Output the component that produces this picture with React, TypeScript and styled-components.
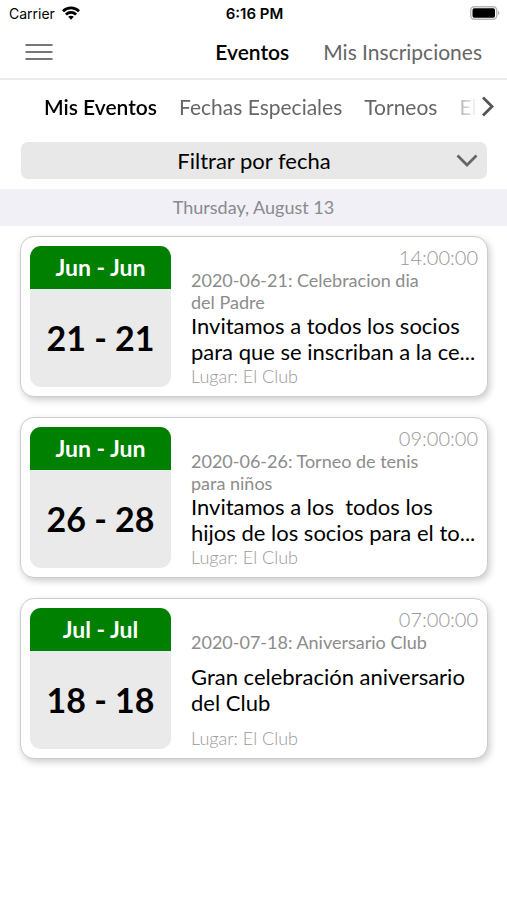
import React from "react";
import styled, { createGlobalStyle } from "styled-components";

const GlobalStyle = createGlobalStyle`
  *, *::before, *::after { box-sizing: border-box; }
  body { margin: 0; background: #fff; color: #000; font-family: Lato, "Liberation Sans", sans-serif; }
  button, select { font: inherit; color: inherit; border: 0; padding: 0; background: none; }
  h2, p { margin: 0; font-weight: 400; }
`;

const Page = styled.div`
  min-height: 100vh;
  background: #fff;
`;

const StatusBar = styled.div`
  display: grid;
  grid-template-columns: 1fr auto 1fr;
  align-items: center;
  height: 26px;
  padding: 0 7px 0 9px;
  font-family: Inter, sans-serif;
  font-size: 14px;
`;

const Carrier = styled.span`
  display: flex;
  align-items: center;
  gap: 7px;
`;

const Clock = styled.strong`
  font-size: 15px;
  font-weight: 600;
`;

const BatteryIcon = styled.svg`
  justify-self: end;
`;

const TopBar = styled.header`
  display: flex;
  align-items: center;
  height: 54px;
  padding: 0 25px;
  border-bottom: 2px solid #ececec;
`;

const MenuButton = styled.button`
  display: flex;
  margin-right: auto;
  cursor: pointer;
`;

const MainNav = styled.nav`
  display: flex;
  gap: 34px;
`;

const NavLink = styled.a<{ $active?: boolean }>`
  color: ${(p) => (p.$active ? "#000" : "#666")};
  font-size: 21px;
  font-weight: ${(p) => (p.$active ? 600 : 400)};
  line-height: 26px;
  text-decoration: none;
  white-space: nowrap;
`;

const TabBar = styled.div`
  display: flex;
  align-items: center;
  height: 53px;
  padding: 0 10px 0 44px;
`;

const Tabs = styled.nav`
  display: flex;
  flex: 1;
  min-width: 0;
  gap: 22px;
  overflow: hidden;
  mask-image: linear-gradient(to right, #000 calc(100% - 40px), transparent);
`;

const NextButton = styled.button`
  display: flex;
  flex: none;
  cursor: pointer;
`;

const FilterField = styled.div`
  display: grid;
  align-items: center;
  height: 37px;
  margin: 9px 20px 10px 21px;
  border-radius: 7px;
  background: #e8e8e9;
  & > * { grid-area: 1 / 1; }
`;

const FilterSelect = styled.select`
  appearance: none;
  width: 100%;
  height: 100%;
  font-size: 22px;
  text-align: center;
  text-align-last: center;
`;

const FilterArrow = styled.svg`
  justify-self: end;
  margin-right: 9px;
  pointer-events: none;
`;

const DateHeading = styled.h2`
  background: #f0f0f6;
  color: #8a8a8e;
  font-size: 18px;
  line-height: 37px;
  text-align: center;
`;

const EventList = styled.main`
  display: flex;
  flex-direction: column;
  gap: 20px;
  padding: 10px 19px 20px 20px;
`;

const Card = styled.article`
  display: flex;
  gap: 20px;
  padding: 9px;
  border: 1px solid #ccc;
  border-radius: 14px;
  background: #fff;
  box-shadow: 2px 3px 7px rgba(0, 0, 0, 0.2);
`;

const DateBox = styled.div`
  flex: none;
  align-self: flex-start;
  width: 141px;
  border-radius: 11px;
  overflow: hidden;
  background: #eaeaea;
  font-weight: 700;
  text-align: center;
`;

const Months = styled.div`
  background: #008000;
  color: #fff;
  font-size: 23px;
  line-height: 43px;
`;

const Days = styled.div`
  font-size: 34px;
  line-height: 98px;
`;

const Details = styled.div`
  display: flex;
  flex: 1;
  flex-direction: column;
  justify-content: space-between;
  min-width: 0;
`;

const Heading = styled.div``;

const Time = styled.time`
  display: block;
  color: #999;
  font-size: 20px;
  font-weight: 300;
  line-height: 23px;
  text-align: right;
`;

const Title = styled.p`
  max-width: 250px;
  color: #8c8c8c;
  font-size: 18px;
  line-height: 22px;
`;

const Description = styled.p`
  font-size: 22px;
  line-height: 26px;
  white-space: pre-wrap;
`;

const Place = styled.p`
  color: #999;
  font-size: 18px;
  font-weight: 300;
  line-height: 22px;
`;

const events = [
  {
    months: "Jun - Jun",
    days: "21 - 21",
    time: "14:00:00",
    title: "2020-06-21: Celebracion dia del Padre",
    description: "Invitamos a todos los socios para que se inscriban a la ce...",
    place: "El Club",
  },
  {
    months: "Jun - Jun",
    days: "26 - 28",
    time: "09:00:00",
    title: "2020-06-26: Torneo de tenis para niños",
    description: "Invitamos a los  todos los hijos de los socios para el to...",
    place: "El Club",
  },
  {
    months: "Jul - Jul",
    days: "18 - 18",
    time: "07:00:00",
    title: "2020-07-18: Aniversario Club",
    description: "Gran celebración aniversario del Club",
    place: "El Club",
  },
];

export default function App() {
  return (
    <Page>
      <GlobalStyle />
      <StatusBar>
        <Carrier>
          Carrier
          <svg width="18" height="14" viewBox="0 0 18 14" fill="none" stroke="#000" strokeWidth="2.8" aria-hidden="true">
            <path d="M1 5.2C5.5.8 12.5.8 17 5.2M3.9 8.6c3-2.8 7.2-2.8 10.2 0" />
            <path d="M6.2 10.8c1.6-1.4 4-1.4 5.6 0L9 13.8z" fill="#000" stroke="none" />
          </svg>
        </Carrier>
        <Clock>6:16 PM</Clock>
        <BatteryIcon width="30" height="14" viewBox="0 0 30 14" aria-hidden="true">
          <rect x=".75" y=".75" width="26" height="12.5" rx="3.5" fill="none" stroke="#b5b5b5" strokeWidth="1.4" />
          <rect x="2.5" y="2.3" width="22.5" height="9.4" rx="1.8" />
          <path d="M28 4.5q3 2.5 0 5z" fill="#b5b5b5" />
        </BatteryIcon>
      </StatusBar>
      <TopBar>
        <MenuButton type="button" aria-label="Menú">
          <svg width="28" height="18" viewBox="0 0 28 18" stroke="#777" strokeWidth="2" aria-hidden="true">
            <path d="M.5 2h27M.5 9h27M.5 16h27" />
          </svg>
        </MenuButton>
        <MainNav>
          <NavLink href="#eventos" $active>Eventos</NavLink>
          <NavLink href="#inscripciones">Mis Inscripciones</NavLink>
        </MainNav>
      </TopBar>
      <TabBar>
        <Tabs>
          <NavLink href="#mis-eventos" $active>Mis Eventos</NavLink>
          <NavLink href="#especiales">Fechas Especiales</NavLink>
          <NavLink href="#torneos">Torneos</NavLink>
          <NavLink href="#el-club">El</NavLink>
        </Tabs>
        <NextButton type="button" aria-label="Siguiente">
          <svg width="18" height="22" viewBox="0 0 18 22" fill="none" stroke="#555" strokeWidth="2.8" aria-hidden="true">
            <path d="m4 1.5 9 9-9 9" />
          </svg>
        </NextButton>
      </TabBar>
      <FilterField>
        <FilterSelect aria-label="Filtrar por fecha">
          <option>Filtrar por fecha</option>
        </FilterSelect>
        <FilterArrow width="22" height="14" viewBox="0 0 22 14" fill="none" stroke="#666" strokeWidth="2.8" aria-hidden="true">
          <path d="m1.5 1.5 9.5 9.5 9.5-9.5" />
        </FilterArrow>
      </FilterField>
      <DateHeading>Thursday, August 13</DateHeading>
      <EventList>
        {events.map((e) => (
          <Card key={e.title}>
            <DateBox>
              <Months>{e.months}</Months>
              <Days>{e.days}</Days>
            </DateBox>
            <Details>
              <Heading>
                <Time>{e.time}</Time>
                <Title>{e.title}</Title>
              </Heading>
              <Description>{e.description}</Description>
              <Place>Lugar: {e.place}</Place>
            </Details>
          </Card>
        ))}
      </EventList>
    </Page>
  );
}
